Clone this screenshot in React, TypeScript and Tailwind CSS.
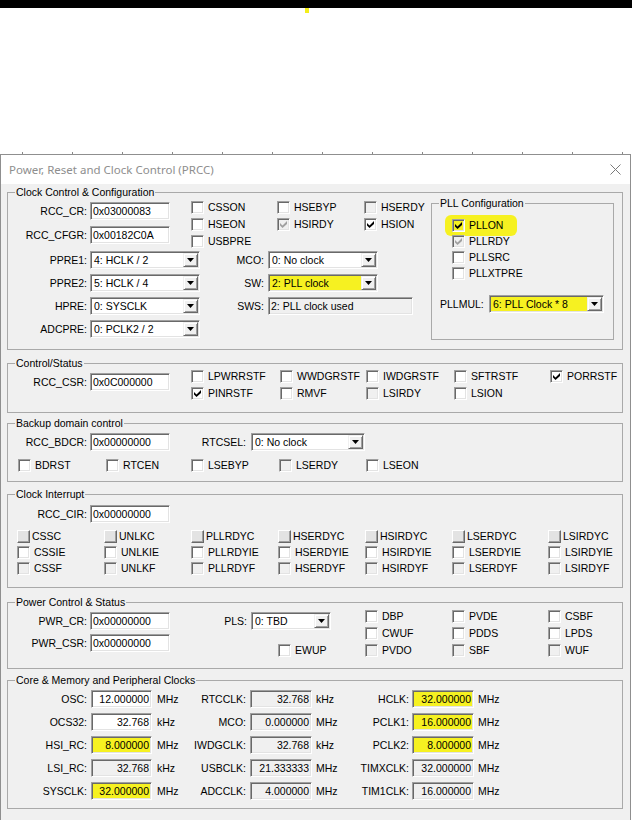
import React from 'react';

const Y = 'bg-[#f6f121]';
const SUNK =
  'border border-[#a0a0a0] border-b-white border-r-white shadow-[inset_1px_1px_0_#696969,inset_-1px_-1px_0_#e3e3e3]';

type S = 'off' | 'on' | 'dis' | 'dison' | 'btn';

function Mark({ c }: { c: string }) {
  return (
    <svg width="7" height="7" viewBox="0 0 7 7">
      <path d="M0 2L2.5 4.5L7 0V3L2.5 7L0 4.5Z" fill={c} />
    </svg>
  );
}

function Box({ s, hl }: { s: S; hl?: boolean }) {
  if (s === 'btn')
    return (
      <span className="w-[13px] h-[13px] shrink-0 bg-[#e3e3e3] border border-t-white border-l-white border-b-[#696969] border-r-[#696969] shadow-[inset_-1px_-1px_0_#a0a0a0]" />
    );
  const bg = hl ? Y : s === 'dis' || s === 'dison' ? 'bg-[#f0f0f0]' : 'bg-white';
  return (
    <span className={`w-[13px] h-[13px] shrink-0 flex items-center justify-center ${SUNK} ${bg}`}>
      {s === 'on' && <Mark c="#000" />}
      {s === 'dison' && <Mark c="#a0a0a0" />}
    </span>
  );
}

function Check({ label, s = 'off', cls = '', hl }: { label: string; s?: S; cls?: string; hl?: boolean }) {
  return (
    <div className={`flex items-center h-[13px] ${cls}`}>
      <Box s={s} hl={hl} />
      <span className={s === 'btn' ? 'ml-[2px]' : 'ml-[4px]'}>{label}</span>
    </div>
  );
}

function Edit({ value, w, bg = 'bg-white', right }: { value: string; w: string; bg?: string; right?: boolean }) {
  return (
    <div
      className={`${w} ${bg} ${SUNK} h-[18px] shrink-0 flex items-center ${right ? 'justify-end pr-[2px]' : 'pl-[2px]'}`}
    >
      {value}
    </div>
  );
}

function Combo({ value, w, hl, cls = '' }: { value: string; w: string; hl?: boolean; cls?: string }) {
  return (
    <div className={`${w} ${cls} ${SUNK} h-[18px] shrink-0 flex bg-white p-[1px]`}>
      <div className={`flex-1 flex items-center pl-[2px] ${hl ? Y : ''}`}>{value}</div>
      <div className="w-[15px] flex items-center justify-center bg-[#f0f0f0] border border-t-[#f0f0f0] border-l-[#f0f0f0] border-b-[#696969] border-r-[#696969] shadow-[inset_1px_1px_0_#fff,inset_-1px_-1px_0_#a0a0a0]">
        <svg width="7" height="4" viewBox="0 0 7 4">
          <path d="M0 0H7L3.5 4Z" fill="#000" />
        </svg>
      </div>
    </div>
  );
}

function Lbl({ w, children }: { w: string; children: React.ReactNode }) {
  return <span className={`${w} shrink-0 text-right`}>{children}</span>;
}

function Field({ label, children }: { label: string; children: React.ReactNode }) {
  return (
    <div className="flex items-center">
      <Lbl w="w-[79px]">{label}</Lbl>
      <div className="ml-[3px]">{children}</div>
    </div>
  );
}

function Group({ title, cls, children }: { title: string; cls: string; children: React.ReactNode }) {
  return (
    <div className={`relative border border-[#a9a9a9] ${cls}`}>
      <span className="absolute -top-[7px] left-[7px] bg-[#f0f0f0] px-[1px] leading-[13px]">{title}</span>
      {children}
    </div>
  );
}

const clk = [
  [
    ['OSC:', '12.000000', 'MHz', 'bg-white'],
    ['RTCCLK:', '32.768', 'kHz', 'bg-[#f0f0f0]'],
    ['HCLK:', '32.000000', 'MHz', Y],
  ],
  [
    ['OCS32:', '32.768', 'kHz', 'bg-white'],
    ['MCO:', '0.000000', 'MHz', 'bg-[#f0f0f0]'],
    ['PCLK1:', '16.000000', 'MHz', Y],
  ],
  [
    ['HSI_RC:', '8.000000', 'MHz', Y],
    ['IWDGCLK:', '32.768', 'kHz', 'bg-[#f0f0f0]'],
    ['PCLK2:', '8.000000', 'MHz', Y],
  ],
  [
    ['LSI_RC:', '32.768', 'kHz', 'bg-[#f0f0f0]'],
    ['USBCLK:', '21.333333', 'MHz', 'bg-[#f0f0f0]'],
    ['TIMXCLK:', '32.000000', 'MHz', 'bg-[#f0f0f0]'],
  ],
  [
    ['SYSCLK:', '32.000000', 'MHz', Y],
    ['ADCCLK:', '4.000000', 'MHz', 'bg-[#f0f0f0]'],
    ['TIM1CLK:', '16.000000', 'MHz', 'bg-[#f0f0f0]'],
  ],
];

const irq = ['CSS', 'UNLK', 'PLLRDY', 'HSERDY', 'HSIRDY', 'LSERDY', 'LSIRDY'];

export default function App() {
  return (
    <div className="w-[632px] h-[820px] overflow-hidden bg-white font-['Liberation_Sans',Arial,sans-serif] text-[10.5px] leading-[13px] text-black">
      <div className="h-[8px] bg-black" />
      <div className="h-[143px]">
        <div className="ml-[305px] w-[4px] h-[5px] bg-[#f3ee1a]" />
      </div>
      <div className="h-[3px] flex items-end gap-[49px] pl-[22px]">
        {Array.from({ length: 13 }).map((_, i) => (
          <span key={i} className="w-px h-[2px] bg-[#888]" />
        ))}
      </div>

      <div className="w-[631px] border border-[#8f8f8f] border-b-0 bg-[#f0f0f0]">
        <div className="h-[29px] bg-white flex items-center justify-between pl-[8px] pr-[9px]">
          <span className="font-['Noto_Sans',sans-serif] text-[11.5px] text-[#8e8e8e]">
            Power, Reset and Clock Control (PRCC)
          </span>
          <svg width="11" height="11" viewBox="0 0 11 11">
            <path d="M0.5 0.5L10.5 10.5M10.5 0.5L0.5 10.5" stroke="#7a7a7a" strokeWidth="1" />
          </svg>
        </div>

        <div className="pl-[6px] pb-[12px]">
          {/* Clock Control & Configuration */}
          <Group title="Clock Control & Configuration" cls="w-[616px] h-[158px] mt-[8px]">
            <div className="flex">
              <div className="w-[423px] pt-[7px]">
                <div className="flex">
                  <div className="flex flex-col gap-[6px] pt-[2px]">
                    <Field label="RCC_CR:">
                      <Edit value="0x03000083" w="w-[80px]" />
                    </Field>
                    <Field label="RCC_CFGR:">
                      <Edit value="0x00182C0A" w="w-[80px]" />
                    </Field>
                  </div>
                  <div className="ml-[21px] pt-[1px] grid grid-cols-[86px_87px_80px] gap-y-[4px]">
                    <Check label="CSSON" />
                    <Check label="HSEBYP" />
                    <Check label="HSERDY" s="dis" />
                    <Check label="HSEON" />
                    <Check label="HSIRDY" s="dison" />
                    <Check label="HSION" s="on" />
                    <Check label="USBPRE" />
                  </div>
                </div>
                <div className="mt-[3px] flex flex-col gap-[5px]">
                  <div className="flex items-center">
                    <Field label="PPRE1:">
                      <Combo value="4: HCLK / 2" w="w-[110px]" />
                    </Field>
                    <Lbl w="w-[64px]">MCO:</Lbl>
                    <Combo value="0: No clock" w="w-[110px]" cls="ml-[4px]" />
                  </div>
                  <div className="flex items-center">
                    <Field label="PPRE2:">
                      <Combo value="5: HCLK / 4" w="w-[110px]" />
                    </Field>
                    <Lbl w="w-[64px]">SW:</Lbl>
                    <Combo value="2: PLL clock" w="w-[110px]" cls="ml-[4px]" hl />
                  </div>
                  <div className="flex items-center">
                    <Field label="HPRE:">
                      <Combo value="0: SYSCLK" w="w-[110px]" />
                    </Field>
                    <Lbl w="w-[64px]">SWS:</Lbl>
                    <div className="ml-[4px]">
                      <Edit value="2: PLL clock used" w="w-[145px]" bg="bg-[#f0f0f0]" />
                    </div>
                  </div>
                  <div className="flex items-center">
                    <Field label="ADCPRE:">
                      <Combo value="0: PCLK2 / 2" w="w-[110px]" />
                    </Field>
                  </div>
                </div>
              </div>

              <Group title="PLL Configuration" cls="w-[183px] h-[137px] mt-[10px]">
                <div className="flex flex-col items-start gap-[3px] pl-[20px] pt-[15px]">
                  <div className="-ml-[7px] pl-[7px] pr-[14px] -my-[4px] py-[4px] rounded-[6px] bg-[#f6f121]">
                    <Check label="PLLON" s="on" hl />
                  </div>
                  <Check label="PLLRDY" s="dison" />
                  <Check label="PLLSRC" />
                  <Check label="PLLXTPRE" />
                </div>
                <div className="flex items-center mt-[15px] pl-[8px]">
                  <span className="w-[49px] shrink-0">PLLMUL:</span>
                  <Combo value="6: PLL Clock * 8" w="w-[115px]" hl />
                </div>
              </Group>
            </div>
          </Group>

          {/* Control/Status */}
          <Group title="Control/Status" cls="w-[616px] h-[50px] mt-[13px]">
            <div className="flex">
              <div className="pt-[9px]">
                <Field label="RCC_CSR:">
                  <Edit value="0x0C000000" w="w-[80px]" />
                </Field>
              </div>
              <div className="ml-[21px] pt-[6px] grid grid-cols-[89px_86px_88px_96px_60px] gap-y-[4px]">
                <Check label="LPWRRSTF" />
                <Check label="WWDGRSTF" />
                <Check label="IWDGRSTF" />
                <Check label="SFTRSTF" />
                <Check label="PORRSTF" s="on" />
                <Check label="PINRSTF" s="on" />
                <Check label="RMVF" />
                <Check label="LSIRDY" s="dis" />
                <Check label="LSION" />
              </div>
            </div>
          </Group>

          {/* Backup domain control */}
          <Group title="Backup domain control" cls="w-[616px] h-[59px] mt-[10px]">
            <div className="flex items-center pt-[9px]">
              <Field label="RCC_BDCR:">
                <Edit value="0x00000000" w="w-[80px]" />
              </Field>
              <Lbl w="w-[76px]">RTCSEL:</Lbl>
              <Combo value="0: No clock" w="w-[114px]" cls="ml-[5px]" />
            </div>
            <div className="flex mt-[8px] pl-[10px]">
              <Check label="BDRST" cls="w-[88px]" />
              <Check label="RTCEN" cls="w-[85px]" />
              <Check label="LSEBYP" cls="w-[88px]" />
              <Check label="LSERDY" s="dis" cls="w-[87px]" />
              <Check label="LSEON" />
            </div>
          </Group>

          {/* Clock Interrupt */}
          <Group title="Clock Interrupt" cls="w-[616px] h-[94px] mt-[12px]">
            <div className="pt-[10px]">
              <Field label="RCC_CIR:">
                <Edit value="0x00000000" w="w-[80px]" />
              </Field>
            </div>
            <div className="mt-[7px] pl-[9px] grid grid-cols-[87px_87px_87px_87px_87px_96px_60px] gap-y-[3px]">
              {irq.map((n) => (
                <Check key={n + 'C'} label={n + 'C'} s="btn" />
              ))}
              {irq.map((n) => (
                <Check key={n + 'IE'} label={n + 'IE'} />
              ))}
              {irq.map((n) => (
                <Check key={n + 'F'} label={n + 'F'} s="dis" />
              ))}
            </div>
          </Group>

          {/* Power Control & Status */}
          <Group title="Power Control & Status" cls="w-[616px] h-[67px] mt-[14px]">
            <div className="flex">
              <div className="flex flex-col gap-[4px] pt-[9px]">
                <Field label="PWR_CR:">
                  <Edit value="0x00000000" w="w-[80px]" />
                </Field>
                <Field label="PWR_CSR:">
                  <Edit value="0x00000000" w="w-[80px]" />
                </Field>
              </div>
              <div className="w-[195px] pt-[9px] flex flex-col">
                <div className="flex items-center">
                  <Lbl w="w-[77px]">PLS:</Lbl>
                  <Combo value="0: TBD" w="w-[80px]" cls="ml-[4px]" />
                </div>
                <Check label="EWUP" cls="ml-[108px] mt-[14px]" />
              </div>
              <div className="pt-[7px] grid grid-cols-[87px_96px_60px] gap-y-[4px]">
                <Check label="DBP" />
                <Check label="PVDE" />
                <Check label="CSBF" />
                <Check label="CWUF" />
                <Check label="PDDS" />
                <Check label="LPDS" />
                <Check label="PVDO" s="dis" />
                <Check label="SBF" s="dis" />
                <Check label="WUF" s="dis" />
              </div>
            </div>
          </Group>

          {/* Core & Memory and Peripheral Clocks */}
          <Group title="Core & Memory and Peripheral Clocks" cls="w-[616px] h-[129px] mt-[11px]">
            <div className="flex flex-col gap-[5px] pt-[9px]">
              {clk.map((row, i) => (
                <div key={i} className="flex items-center">
                  <Lbl w="w-[79px]">{row[0][0]}</Lbl>
                  <div className="ml-[4px]">
                    <Edit value={row[0][1]} w="w-[61px]" bg={row[0][3]} right />
                  </div>
                  <span className="ml-[5px] w-[28px] shrink-0">{row[0][2]}</span>
                  <Lbl w="w-[61px]">{row[1][0]}</Lbl>
                  <div className="ml-[4px]">
                    <Edit value={row[1][1]} w="w-[62px]" bg={row[1][3]} right />
                  </div>
                  <span className="ml-[4px] w-[30px] shrink-0">{row[1][2]}</span>
                  <Lbl w="w-[63px]">{row[2][0]}</Lbl>
                  <div className="ml-[3px]">
                    <Edit value={row[2][1]} w="w-[62px]" bg={row[2][3]} right />
                  </div>
                  <span className="ml-[4px]">{row[2][2]}</span>
                </div>
              ))}
            </div>
          </Group>
        </div>
      </div>
    </div>
  );
}
